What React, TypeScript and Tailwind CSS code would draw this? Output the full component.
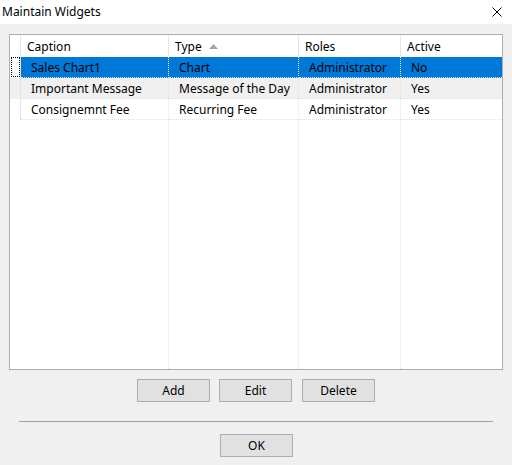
import React from 'react';

const rows = [
  { caption: 'Sales Chart1', type: 'Chart', roles: 'Administrator', active: 'No' },
  { caption: 'Important Message', type: 'Message of the Day', roles: 'Administrator', active: 'Yes' },
  { caption: 'Consignemnt Fee', type: 'Recurring Fee', roles: 'Administrator', active: 'Yes' },
];

const cols = [
  { key: 'caption', title: 'Caption', w: 'w-[148px]' },
  { key: 'type', title: 'Type', w: 'w-[130px]' },
  { key: 'roles', title: 'Roles', w: 'w-[102px]' },
  { key: 'active', title: 'Active', w: 'flex-1' },
] as const;

function rowBg(i: number) {
  if (i === 0) return 'bg-[#0078d7]';
  if (i === 1) return 'bg-[#f0f0f0]';
  return 'bg-white';
}

function DialogButton({ label, className = '' }: { label: string; className?: string }) {
  return (
    <button className={`w-[73px] h-[23px] bg-[#e1e1e1] border border-[#adadad] text-[12px] text-black flex items-center justify-center ${className}`}>
      {label}
    </button>
  );
}

export default function App() {
  return (
    <div
      className="w-[512px] h-[465px] bg-[#f0f0f0] flex flex-col text-black"
      style={{ fontFamily: '"Noto Sans", "Segoe UI", sans-serif' }}
    >
      {/* title bar */}
      <div className="h-[24px] bg-white flex items-center justify-between pl-[2px] pr-[10px]">
        <span className="text-[12px]">Maintain Widgets</span>
        <svg width="10" height="10" viewBox="0 0 10 10">
          <path d="M0.5 0.5 L9.5 9.5 M9.5 0.5 L0.5 9.5" stroke="#000" strokeWidth="1" />
        </svg>
      </div>

      {/* grid */}
      <div className="ml-[9px] mt-[10px] w-[494px] h-[336px] border border-[#adadad] bg-white flex text-[12px]">
        {/* indicator column */}
        <div className="w-[11px] flex flex-col">
          <div className="h-[22px] border-r border-[#e5e5e5]" />
          {rows.map((r, i) => (
            <div key={i} className={`h-[21px] pl-[1px] border-r border-[#e5e5e5] ${i === 1 ? 'bg-[#f0f0f0]' : 'bg-white'}`}>
              {i === 0 && <div className="h-[20px] w-[9px] border border-dotted border-black" />}
            </div>
          ))}
          <div className="flex-1" />
        </div>
        {cols.map((c) => (
          <div key={c.key} className={`${c.w} flex flex-col`}>
            <div className={`h-[22px] flex items-center pl-[6px] pt-[2px] ${c.key !== 'active' ? 'border-r border-[#e5e5e5]' : ''}`}>
              {c.title}
              {c.key === 'type' && (
                <svg width="9" height="5" viewBox="0 0 9 5" className="ml-[7px] -mt-[1px]">
                  <path d="M0 5 L4.5 0 L9 5 Z" fill="#a6a6a6" />
                </svg>
              )}
            </div>
            {rows.map((r, i) => (
              <div
                key={i}
                className={`h-[21px] flex items-center pl-[10px] pt-[2px] border-b border-dotted border-b-[#e0e0e0] ${rowBg(i)} ${c.key !== 'active' ? (i === 0 ? 'border-r border-r-[#f0f0f0]' : 'border-r border-dotted border-r-[#e0e0e0]') : ''}`}
              >
                {r[c.key]}
              </div>
            ))}
            <div className={`flex-1 ${c.key !== 'active' ? 'border-r border-dotted border-[#e0e0e0]' : ''}`} />
          </div>
        ))}
      </div>

      {/* action buttons */}
      <div className="mt-[9px] flex pl-[137px]">
        <DialogButton label="Add" />
        <DialogButton label="Edit" className="ml-[9px]" />
        <DialogButton label="Delete" className="ml-[10px]" />
      </div>

      <div className="mt-[19px] ml-[19px] w-[474px] h-px bg-[#a0a0a0]" />

      <div className="mt-[12px] flex justify-center pl-[1px]">
        <DialogButton label="OK" />
      </div>
    </div>
  );
}
